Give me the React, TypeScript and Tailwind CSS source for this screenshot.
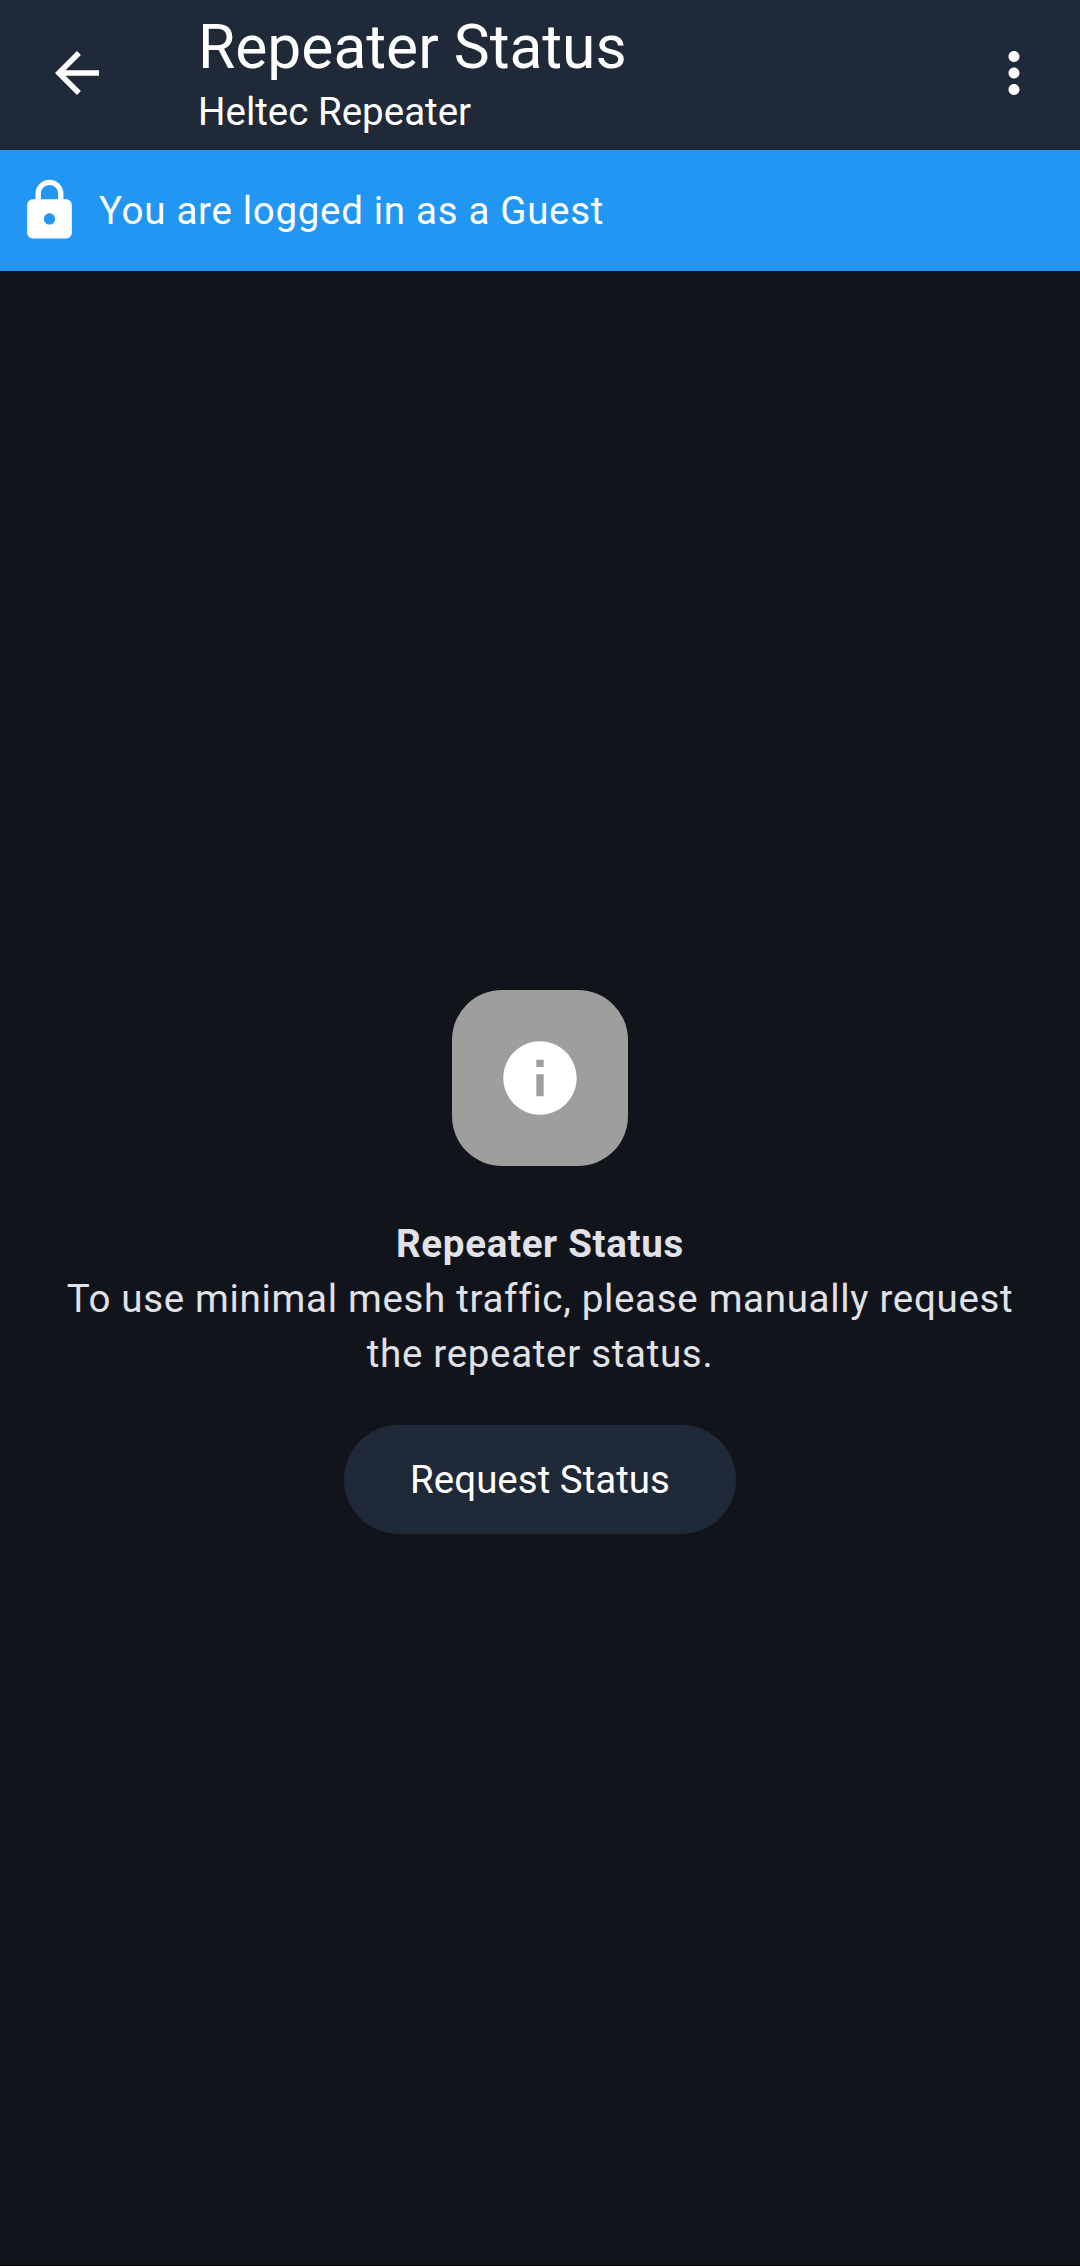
function BackIcon() {
  return (
    <svg viewBox="0 0 24 24" className="size-[66px] fill-white" aria-hidden="true">
      <path d="M20 11H7.83l5.59-5.59L12 4l-8 8 8 8 1.41-1.41L7.83 13H20v-2z" />
    </svg>
  );
}

function MoreIcon() {
  return (
    <svg viewBox="0 0 24 24" className="size-[66px] fill-white" aria-hidden="true">
      <path d="M12 8c1.1 0 2-.9 2-2s-.9-2-2-2-2 .9-2 2 .9 2 2 2zm0 2c-1.1 0-2 .9-2 2s.9 2 2 2 2-.9 2-2-.9-2-2-2zm0 6c-1.1 0-2 .9-2 2s.9 2 2 2 2-.9 2-2-.9-2-2-2z" />
    </svg>
  );
}

function LockIcon() {
  return (
    <svg viewBox="0 0 24 24" className="size-[67px] shrink-0 fill-white" aria-hidden="true">
      <path d="M18 8h-1V6c0-2.76-2.24-5-5-5S7 3.24 7 6v2H6c-1.1 0-2 .9-2 2v10c0 1.1.9 2 2 2h12c1.1 0 2-.9 2-2V10c0-1.1-.9-2-2-2zm-6 9c-1.1 0-2-.9-2-2s.9-2 2-2 2 .9 2 2-.9 2-2 2zm3.1-9H8.9V6c0-1.71 1.39-3.1 3.1-3.1 1.71 0 3.1 1.39 3.1 3.1v2z" />
    </svg>
  );
}

function InfoIcon() {
  return (
    <svg viewBox="0 0 24 24" className="size-[88px] fill-white" aria-hidden="true">
      <path d="M12 2C6.48 2 2 6.48 2 12s4.48 10 10 10 10-4.48 10-10S17.52 2 12 2zm1 15h-2v-6h2v6zm0-8h-2V7h2v2z" />
    </svg>
  );
}

export default function App() {
  return (
    <div className="flex h-[2266px] w-[1080px] flex-col border-b border-black bg-[#11141b] font-['Roboto',sans-serif] text-[38.5px] leading-[55px] text-[#e1e2e8]">
      <header className="flex h-[150px] shrink-0 bg-[#202937] text-white">
        <button className="flex h-[146px] w-[154px] items-center justify-center" aria-label="Back">
          <BackIcon />
        </button>
        <div className="ml-11 flex-1 pt-[9px]">
          <h1 className="text-[60.5px] leading-[77px]">Repeater Status</h1>
          <p className="leading-[51px]">Heltec Repeater</p>
        </div>
        <button className="flex h-[146px] w-[132px] items-center justify-center" aria-label="More options">
          <MoreIcon />
        </button>
      </header>

      <div className="flex h-[121px] shrink-0 items-center gap-4 bg-[#2196f3] pl-4 tracking-[0.6875px] text-white">
        <LockIcon />
        <p>You are logged in as a Guest</p>
      </div>

      <main className="flex flex-1 flex-col items-center px-11 pt-[719px]">
        <div className="flex size-[176px] items-center justify-center rounded-[50px] bg-[#9e9e9e]">
          <InfoIcon />
        </div>
        <h2 className="mt-[50px] font-bold tracking-[0.6875px]">Repeater Status</h2>
        <p className="text-center tracking-[0.6875px]">
          To use minimal mesh traffic, please manually request the repeater status.
        </p>
        <button className="mt-11 h-[109px] rounded-full bg-[#202937] px-[66px] text-white">
          Request Status
        </button>
      </main>
    </div>
  );
}
